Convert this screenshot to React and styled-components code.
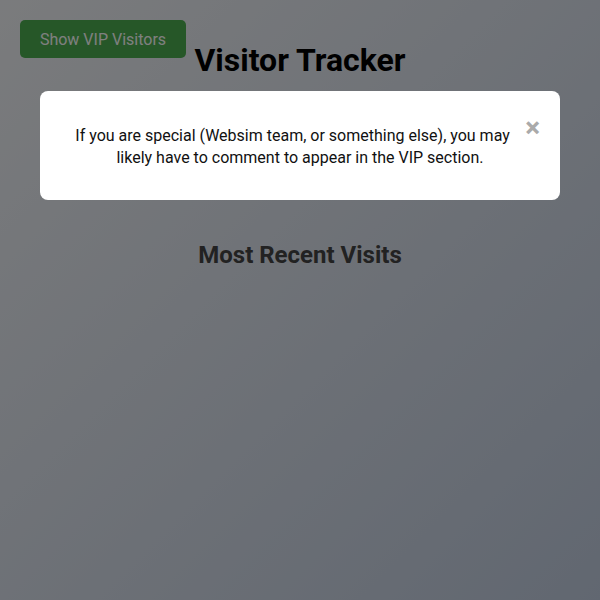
import React from "react";
import styled, { createGlobalStyle } from "styled-components";

const Global = createGlobalStyle`
  html, body { margin: 0; padding: 0; }
  body {
    font-family: Roboto, "Noto Sans", "Liberation Sans", sans-serif;
    min-height: 600px;
    background: linear-gradient(135deg, #f5f7fa 0%, #c3cfe2 100%);
  }
`;

const Page = styled.div`
  min-height: 600px;
  padding: 20px;
  box-sizing: border-box;
  display: flex;
  flex-direction: column;
  align-items: center;
`;

const Title = styled.h1`
  margin: 21px 0 0;
  font-size: 32px;
  font-weight: 700;
  color: #000;
  line-height: 1.2;
`;

const Section = styled.h2`
  margin: 162px 0 0;
  font-size: 24px;
  font-weight: 700;
  color: #444;
  line-height: 1.2;
`;

const VipButton = styled.button`
  position: fixed;
  top: 20px;
  left: 20px;
  width: 166px;
  height: 38px;
  border: none;
  border-radius: 5px;
  background: #4caf50;
  color: #fff;
  font-family: inherit;
  font-size: 16px;
  cursor: pointer;
`;

const Overlay = styled.div`
  position: fixed;
  inset: 0;
  background: rgba(0, 0, 0, 0.5);
  padding: 91px 40px 0;
  box-sizing: border-box;
`;

const Modal = styled.div`
  background: #fff;
  border-radius: 8px;
  padding: 20px;
  text-align: center;
`;

const Message = styled.p`
  margin: 14px 0 11px;
  font-size: 16px;
  line-height: 22px;
  color: #111;
`;

const Close = styled.span`
  float: right;
  margin-top: 3px;
  font-size: 28px;
  font-weight: 700;
  line-height: 28px;
  color: #aaa;
  cursor: pointer;
`;

export default function App() {
  return (
    <>
      <Global />
      <Page>
        <Title>Visitor Tracker</Title>
        <Section>Most Recent Visits</Section>
      </Page>
      <VipButton>Show VIP Visitors</VipButton>
      <Overlay>
        <Modal>
          <Close>×</Close>
          <Message>
            If you are special (Websim team, or something else), you may likely
            have to comment to appear in the VIP section.
          </Message>
        </Modal>
      </Overlay>
    </>
  );
}
